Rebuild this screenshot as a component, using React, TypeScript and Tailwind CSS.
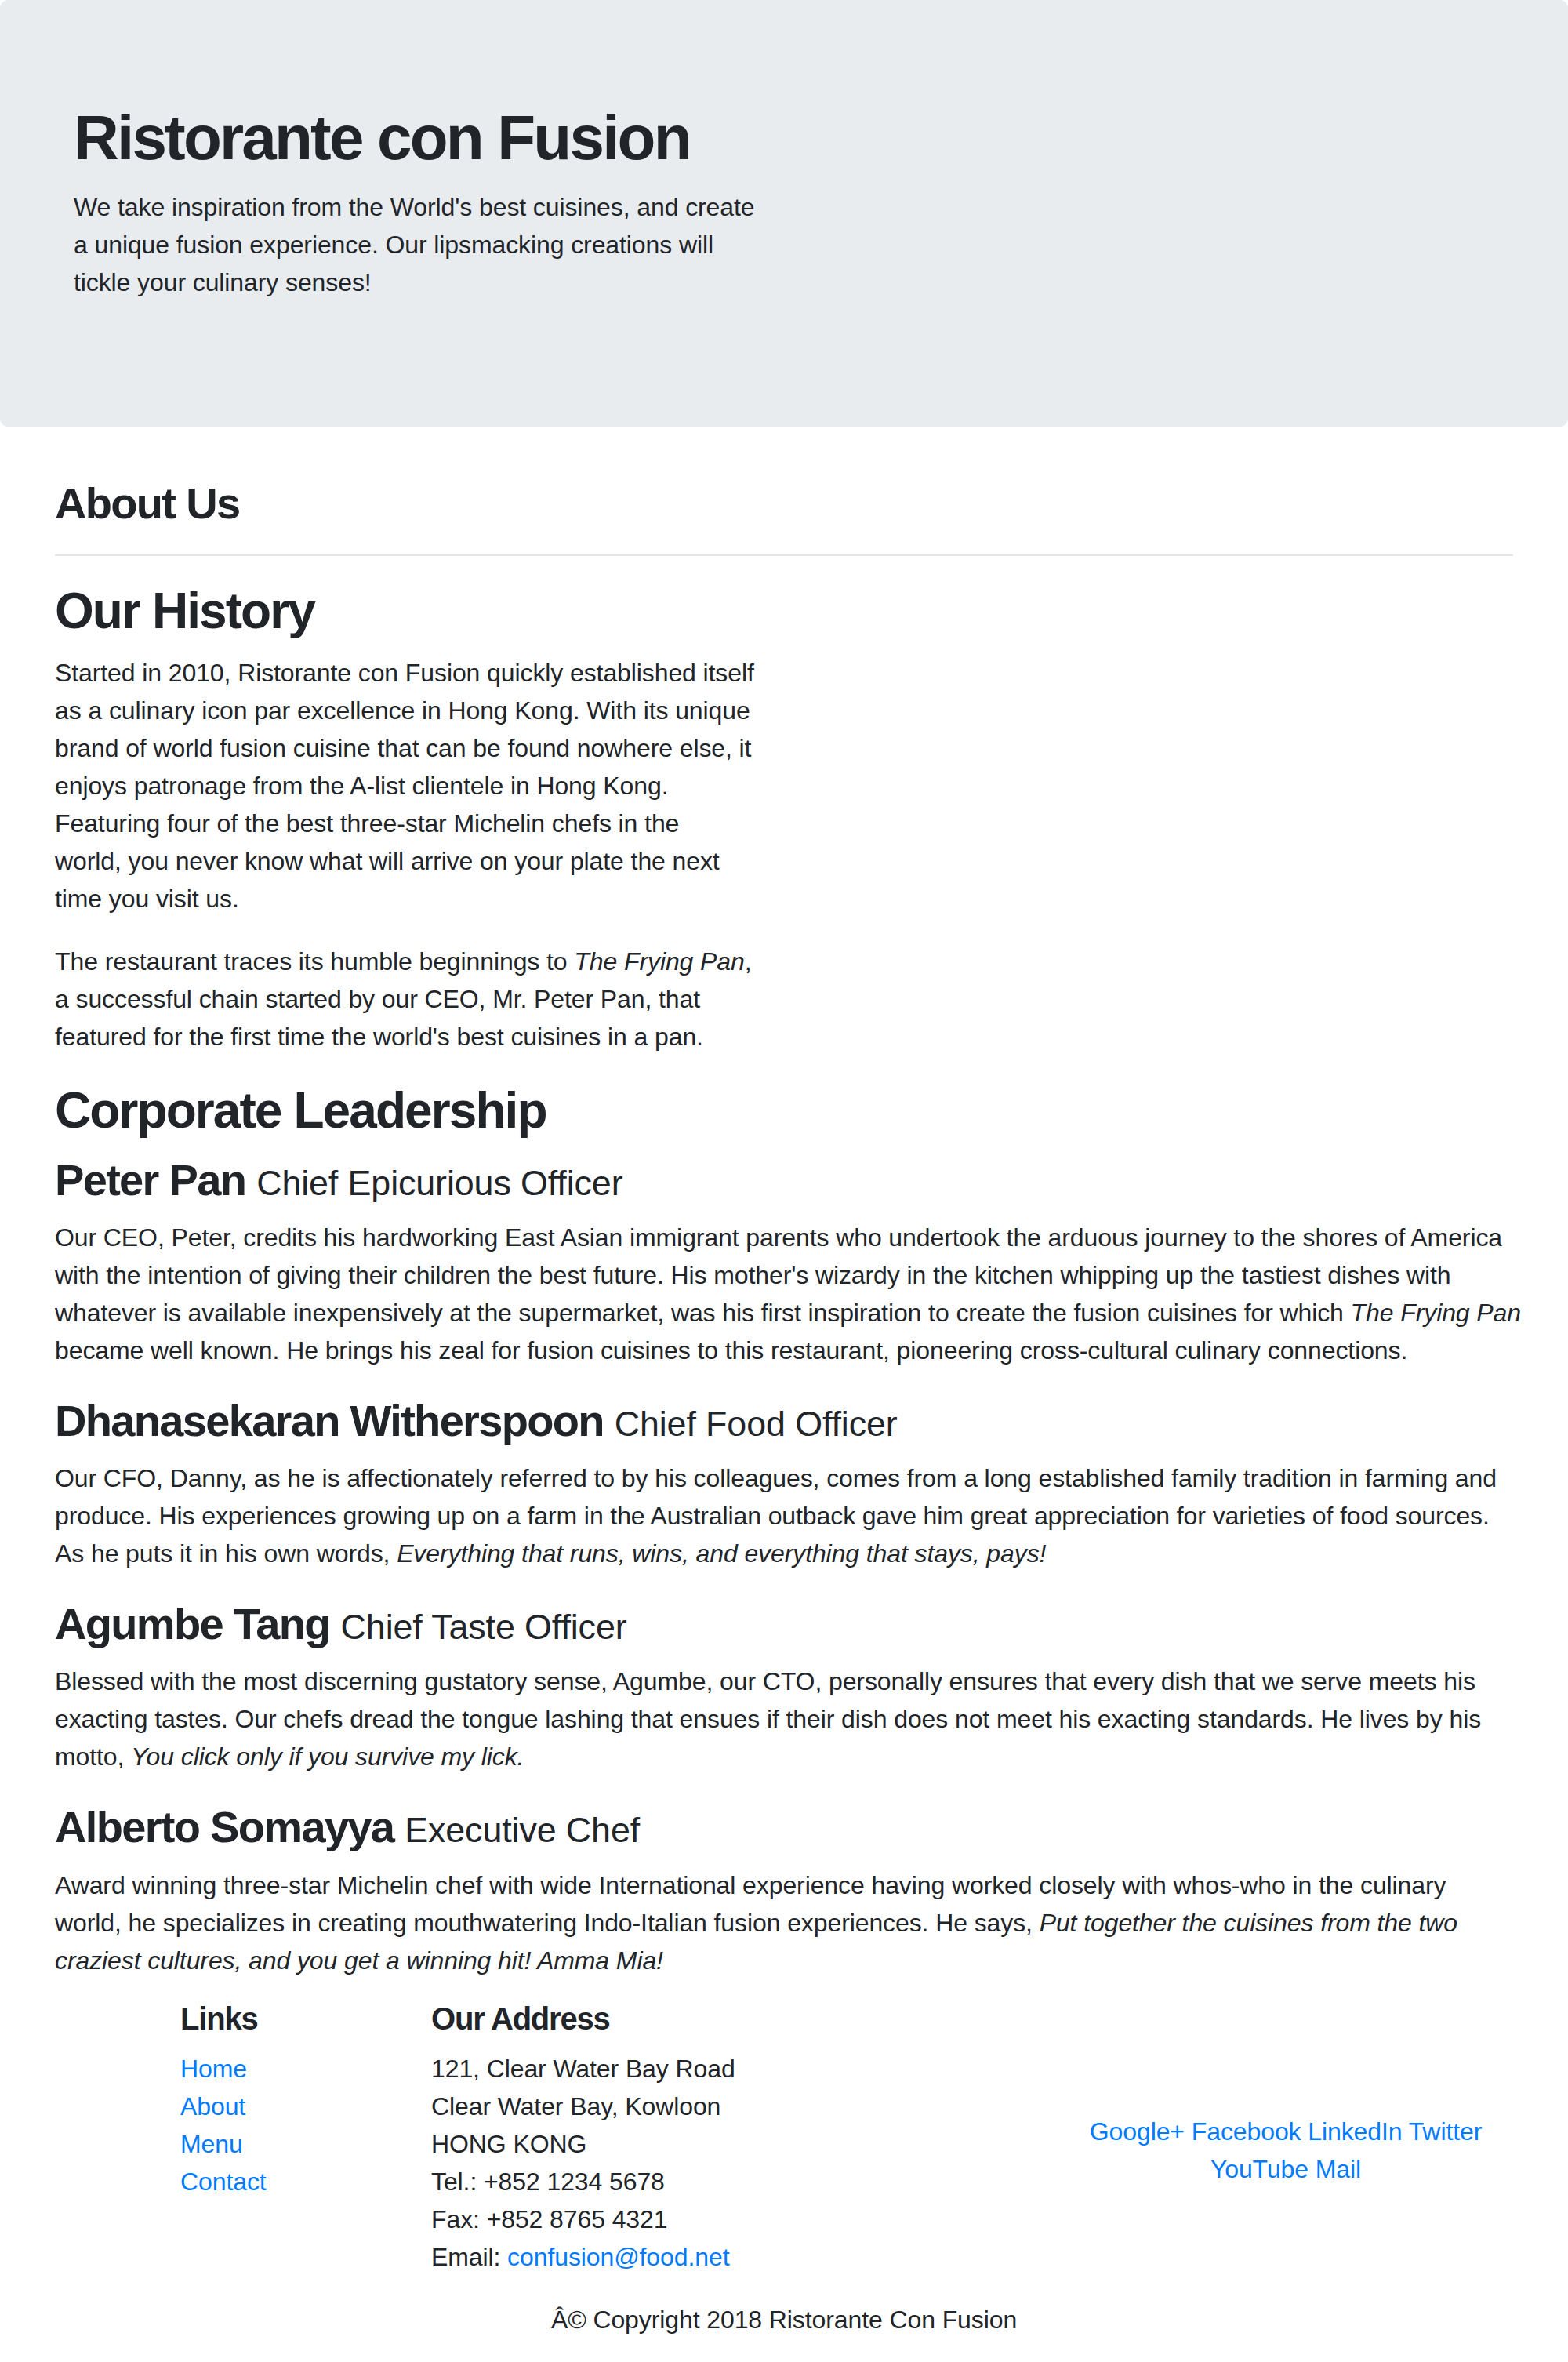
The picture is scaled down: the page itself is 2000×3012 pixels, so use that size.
import type { ReactNode } from "react";

type Leader = {
  name: string;
  title: string;
  lines: ReactNode[];
};

const leaders: Leader[] = [
  {
    name: "Peter Pan",
    title: "Chief Epicurious Officer",
    lines: [
      "Our CEO, Peter, credits his hardworking East Asian immigrant parents who undertook the arduous journey to the shores of America",
      "with the intention of giving their children the best future. His mother's wizardy in the kitchen whipping up the tastiest dishes with",
      <>
        whatever is available inexpensively at the supermarket, was his first inspiration to create the fusion cuisines for which{" "}
        <em>The Frying Pan</em>
      </>,
      "became well known. He brings his zeal for fusion cuisines to this restaurant, pioneering cross-cultural culinary connections.",
    ],
  },
  {
    name: "Dhanasekaran Witherspoon",
    title: "Chief Food Officer",
    lines: [
      "Our CFO, Danny, as he is affectionately referred to by his colleagues, comes from a long established family tradition in farming and",
      "produce. His experiences growing up on a farm in the Australian outback gave him great appreciation for varieties of food sources.",
      <>
        As he puts it in his own words, <em>Everything that runs, wins, and everything that stays, pays!</em>
      </>,
    ],
  },
  {
    name: "Agumbe Tang",
    title: "Chief Taste Officer",
    lines: [
      "Blessed with the most discerning gustatory sense, Agumbe, our CTO, personally ensures that every dish that we serve meets his",
      "exacting tastes. Our chefs dread the tongue lashing that ensues if their dish does not meet his exacting standards. He lives by his",
      <>
        motto, <em>You click only if you survive my lick.</em>
      </>,
    ],
  },
  {
    name: "Alberto Somayya",
    title: "Executive Chef",
    lines: [
      "Award winning three-star Michelin chef with wide International experience having worked closely with whos-who in the culinary",
      <>
        world, he specializes in creating mouthwatering Indo-Italian fusion experiences. He says,{" "}
        <em>Put together the cuisines from the two</em>
      </>,
      <em>craziest cultures, and you get a winning hit! Amma Mia!</em>,
    ],
  },
];

// keeps the wraps where the original page had them
function Lines({ lines }: { lines: ReactNode[] }) {
  return (
    <>
      {lines.map((l, i) => (
        <span key={i}>
          {l}
          {i < lines.length - 1 && <br />}
        </span>
      ))}
    </>
  );
}

export default function App() {
  return (
    <div className="min-h-[3012px] bg-white font-['Liberation_Sans',Arial,sans-serif] text-[32px] leading-[48px] tracking-[-0.1px] text-[#212529]">
      <header className="mb-16 rounded-[10px] bg-[#e9ecef] px-16 py-32">
        <div className="px-[30px]">
          <div className="w-1/2 pr-[30px]">
            <h1 className="mb-4 text-[80px] font-bold leading-[1.2] tracking-[-0.035em]">Ristorante con Fusion</h1>
            <p className="mb-8 whitespace-nowrap">
              <Lines
                lines={[
                  "We take inspiration from the World's best cuisines, and create",
                  "a unique fusion experience. Our lipsmacking creations will",
                  "tickle your culinary senses!",
                ]}
              />
            </p>
          </div>
        </div>
      </header>

      <main className="mx-auto max-w-[1920px] px-[30px]">
        <h3 className="text-[56px] font-bold leading-[1.2] tracking-[-0.03em]">About Us</h3>
        <hr className="my-8 border-t-2 border-black/10" />

        <div className="w-[900px]">
          <h2 className="mb-4 text-[64px] font-bold leading-[1.2] tracking-[-0.03em]">Our History</h2>
          <p className="mb-8 whitespace-nowrap">
            <Lines
              lines={[
                "Started in 2010, Ristorante con Fusion quickly established itself",
                "as a culinary icon par excellence in Hong Kong. With its unique",
                "brand of world fusion cuisine that can be found nowhere else, it",
                "enjoys patronage from the A-list clientele in Hong Kong.",
                "Featuring four of the best three-star Michelin chefs in the",
                "world, you never know what will arrive on your plate the next",
                "time you visit us.",
              ]}
            />
          </p>
          <p className="mb-8 whitespace-nowrap">
            <Lines
              lines={[
                <>
                  The restaurant traces its humble beginnings to <em>The Frying Pan</em>,
                </>,
                "a successful chain started by our CEO, Mr. Peter Pan, that",
                "featured for the first time the world's best cuisines in a pan.",
              ]}
            />
          </p>
        </div>

        <h2 className="mb-4 text-[64px] font-bold leading-[1.2] tracking-[-0.03em]">Corporate Leadership</h2>
        {leaders.map((l) => (
          <div key={l.name}>
            <h3 className="mb-4 text-[56px] font-bold leading-[1.2] tracking-[-0.03em]">
              {l.name}{" "}
              <small className="text-[44.8px] font-normal tracking-[-0.1px]">{l.title}</small>
            </h3>
            <p className="mb-8 whitespace-nowrap">
              <Lines lines={l.lines} />
            </p>
          </div>
        ))}
      </main>

      <footer className="-mt-1.5">
        <div className="mx-auto flex max-w-[1920px]">
          <div className="ml-[160px] w-[320px] px-[30px]">
            <h5 className="mb-4 text-[40px] font-bold leading-[1.2] tracking-[-0.03em]">Links</h5>
            <ul className="mb-8">
              {["Home", "About", "Menu", "Contact"].map((x) => (
                <li key={x}>
                  <a href="#" className="text-[#007bff]">
                    {x}
                  </a>
                </li>
              ))}
            </ul>
          </div>
          <div className="w-[800px] px-[30px]">
            <h5 className="mb-4 text-[40px] font-bold leading-[1.2] tracking-[-0.03em]">Our Address</h5>
            <address className="mb-8 not-italic">
              121, Clear Water Bay Road
              <br />
              Clear Water Bay, Kowloon
              <br />
              HONG KONG
              <br />
              Tel.: +852 1234 5678
              <br />
              Fax: +852 8765 4321
              <br />
              Email:{" "}
              <a href="mailto:confusion@food.net" className="text-[#007bff]">
                confusion@food.net
              </a>
            </address>
          </div>
          <div className="w-[640px] self-center px-[30px] text-center">
            {["Google+", "Facebook", "LinkedIn", "Twitter", "YouTube", "Mail"].map((s) => (
              <span key={s}>
                <a href="#" className="text-[#007bff]">
                  {s}
                </a>{" "}
              </span>
            ))}
          </div>
        </div>
        <div className="flex justify-center">
          <p className="mb-8">Â© Copyright 2018 Ristorante Con Fusion</p>
        </div>
      </footer>
    </div>
  );
}
